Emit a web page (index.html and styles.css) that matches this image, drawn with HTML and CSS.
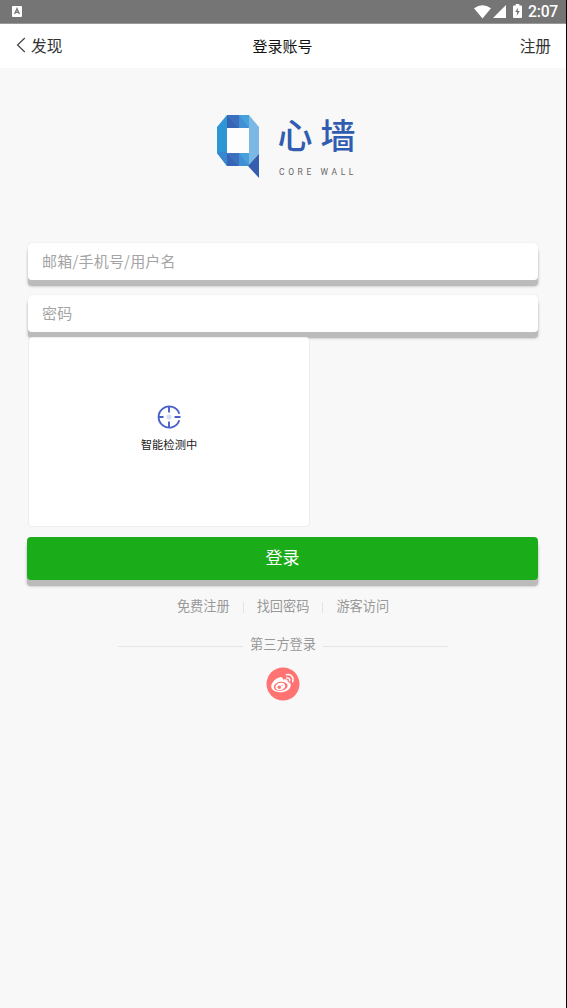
FILE: index.html
```html
<!DOCTYPE html>
<html lang="zh-CN">
<head>
<meta charset="utf-8">
<title>登录账号</title>
<link rel="stylesheet" href="styles.css">
</head>
<body>
<div class="screen">
  <div class="status">
    <svg class="status-app" width="10" height="11" viewBox="0 0 10 11"><rect width="10" height="11" rx="1" fill="#fff"/><path d="M2.6 8L5 2.7 7.4 8M3.5 6.3h3" fill="none" stroke="#757575" stroke-width="1.3"/></svg>
    <svg class="status-wifi" width="17" height="14" viewBox="0 0 17 14"><path d="M0 3.2Q8.500-2.800 17 3.200L8.500 13.500z" fill="#fff"/></svg>
    <svg class="status-cell" width="13" height="13" viewBox="0 0 13 13"><path d="M13 0v13H0z" fill="#fff"/></svg>
    <svg class="status-battery" width="9" height="14" viewBox="0 0 9 14"><path d="M2.700 0h3.600v1.500H8q1 0 1 1V13q0 1-1 1H1q-1 0-1-1V2.500q0-1 1-1h1.700z" fill="#fff"/><path d="M5.200 3.500L2.200 8h2L3.700 12l3.100-4.900H4.700z" fill="#757575"/></svg>
    <span class="clock">2:07</span>
  </div>
  <header class="header">
    <a class="back"><svg width="10" height="16" viewBox="0 0 10 16"><path d="M8.800 1L1.500 8l7.300 7" fill="none" stroke="#444" stroke-width="1.200"/></svg><span>发现</span></a>
    <h1 class="title">登录账号</h1>
    <a class="register">注册</a>
  </header>
  <main class="main">
    <div class="logo">
      <svg width="42" height="63" viewBox="0 0 42 63">
        <path d="M10 0L0 12v26l10 13z" fill="#2f96d6"/>
        <path d="M0 38l10-2v15z" fill="#3988cf"/>
        <path d="M32 0l10 12v29L32 51z" fill="#7bb8e4"/>
        <path d="M10 0h22v13H10zM10 38h22v13H10z" fill="#3e8fd3"/>
        <path d="M10 0l12 13H10zM10 38l12 13H10z" fill="#3765b6"/>
        <path d="M10 0h12v13zM10 38h12v13z" fill="#3c70bf"/>
        <path d="M22 0l10 13V0zM22 38l10 13V38z" fill="#46a0dc"/>
        <path d="M10.500 13H32v25H10.500z" fill="#fdfdfd"/>
        <path d="M42 39v24L31 51z" fill="#355fae"/>
      </svg>
      <div class="brand"><span class="brand-cn">心墙</span><span class="brand-en">CORE WALL</span></div>
    </div>
    <div class="field">邮箱/手机号/用户名</div>
    <div class="field field-password">密码</div>
    <div class="captcha">
      <svg width="24" height="24" viewBox="0 0 24 24"><path d="M22.300 15.200A10.600 10.600 0 1 1 22.300 8.800M12 1.500v6M12 22.500v-6M1.500 12h5M17.500 12h6" fill="none" stroke="#4b5fc8" stroke-width="1.900"/><circle cx="12" cy="12" r="2.600" fill="#d8dcf2"/></svg>
      <span>智能检测中</span>
    </div>
    <div class="submit">登录</div>
    <nav class="links"><a>免费注册</a><i></i><a>找回密码</a><i></i><a>游客访问</a></nav>
    <div class="third"><span>第三方登录</span></div>
    <svg class="weibo" width="34" height="34" viewBox="0 0 34 34">
      <circle cx="17" cy="17" r="16.500" fill="#ff7373"/>
      <path d="M14 10.200c2-.5 3.200.5 2.800 2.500 2.700-1 5.200-.5 4.900 2 2.300.7 3.500 2 3 4.200-.8 3.600-4.900 6.200-10 6.300-5.600.1-9.500-2.300-9.500-5.900 0-3.500 4.500-8.200 8.800-9.100z" fill="#fff"/>
      <ellipse cx="14.700" cy="19.300" rx="7" ry="4.500" transform="rotate(-9 14.700 19.300)" fill="#ff7373"/>
      <ellipse cx="14.300" cy="19.500" rx="5" ry="3.700" transform="rotate(-15 14.300 19.500)" fill="#fff"/>
      <circle cx="13.300" cy="20.200" r="1.700" fill="#ff7373"/><circle cx="16.100" cy="18.600" r=".7" fill="#ff7373"/>
      <path d="M20.500 7.800c4.500-1 7.600 2.700 6.200 7M20.800 11c2-.5 3.300 1 2.800 2.800" fill="none" stroke="#fff" stroke-width="1.500" stroke-linecap="round"/>
    </svg>
  </main>
</div>
</body>
</html>
```
FILE: styles.css
```css
* { box-sizing: border-box; }
body { margin: 0; background: #f8f8f8; font-family: "Noto Sans CJK SC", sans-serif; }
.screen { height: 1008px; border-right: 1px solid #000; overflow: hidden; }
.status { height: 24px; background: #757575; border-bottom: 1px solid #999; display: flex; align-items: center; padding: 0 8px 0 12px; color: #fff; }
.status-wifi { margin-left: auto; }
.status-cell { margin-left: 2px; }
.status-battery { margin: -2px 6px 0 7px; }
.clock { font: 500 15.700px/24px Roboto, sans-serif; width: 30px; padding-top: 1px; white-space: nowrap; letter-spacing: -.2px; }
.header { height: 44px; background: #fff; display: grid; grid-template-columns: 1fr auto 1fr; align-items: center; padding: 0 15px 0 16px; font-size: 15.700px; line-height: 24px; color: #333; }
.back { display: flex; align-items: center; gap: 5px; }
.back svg { margin-top: -2px; }
.title { margin: -1px 1px 0 -1px; font-size: 15px; font-weight: 400; color: #111; }
.register { text-align: right; }
.main { padding: 0 28px; display: flex; flex-direction: column; }
.logo { height: 174px; padding: 47px 0 0 188.500px; display: flex; align-items: flex-start; gap: 19px; }
.brand { display: flex; flex-direction: column; white-space: nowrap; margin-top: -3px; }
.brand-cn { font-size: 35px; line-height: 44px; letter-spacing: 8px; font-weight: 500; color: #315db0; }
.brand-en { margin: 10px 0 0 1.500px; font: 8.500px/12px Roboto, sans-serif; letter-spacing: 3.600px; color: #666; }
.field { height: 37px; padding: 0 0 0 14px; border-radius: 4px; background: #fff; box-shadow: 0 0 1px #ccc, 0 6px 0 #bbb, 0 6px 3px #aaa; color: #a4a4a4; font-size: 15px; letter-spacing: .2px; line-height: 35px; margin-top: 1px; }
.field-password { margin-top: 15px; }
.captcha { width: 282px; height: 190px; margin-top: 5px; position: relative; border: 1px solid #ededed; border-radius: 4px; background: #fff; display: flex; flex-direction: column; align-items: center; padding-top: 67px; font-size: 11.300px; line-height: 18px; color: #222; gap: 6px; }
.submit { height: 43px; margin: 10px 0 0 -1px; border-radius: 4px; background: #1aad19; box-shadow: 0 6px 0 #bbb, 0 6px 3px #aaa; color: #fff; font-size: 17px; line-height: 39px; text-align: center; }
.links { display: flex; justify-content: center; align-items: center; gap: 13px; margin: 16px 0 0 0; font-size: 13.200px; line-height: 20px; color: #999; }
.links i { width: 1px; height: 11px; margin-top: 2px; background: #e3e3e3; }
.third { display: flex; align-items: center; width: 330px; margin: 18px auto 0; gap: 7px; color: #999; font-size: 13.200px; line-height: 20px; }
.third::before, .third::after { content: ""; flex: 1; height: 1px; background: #e5e5e5; margin-top: 5px; }
.weibo { margin: 13px auto 0; }
```
